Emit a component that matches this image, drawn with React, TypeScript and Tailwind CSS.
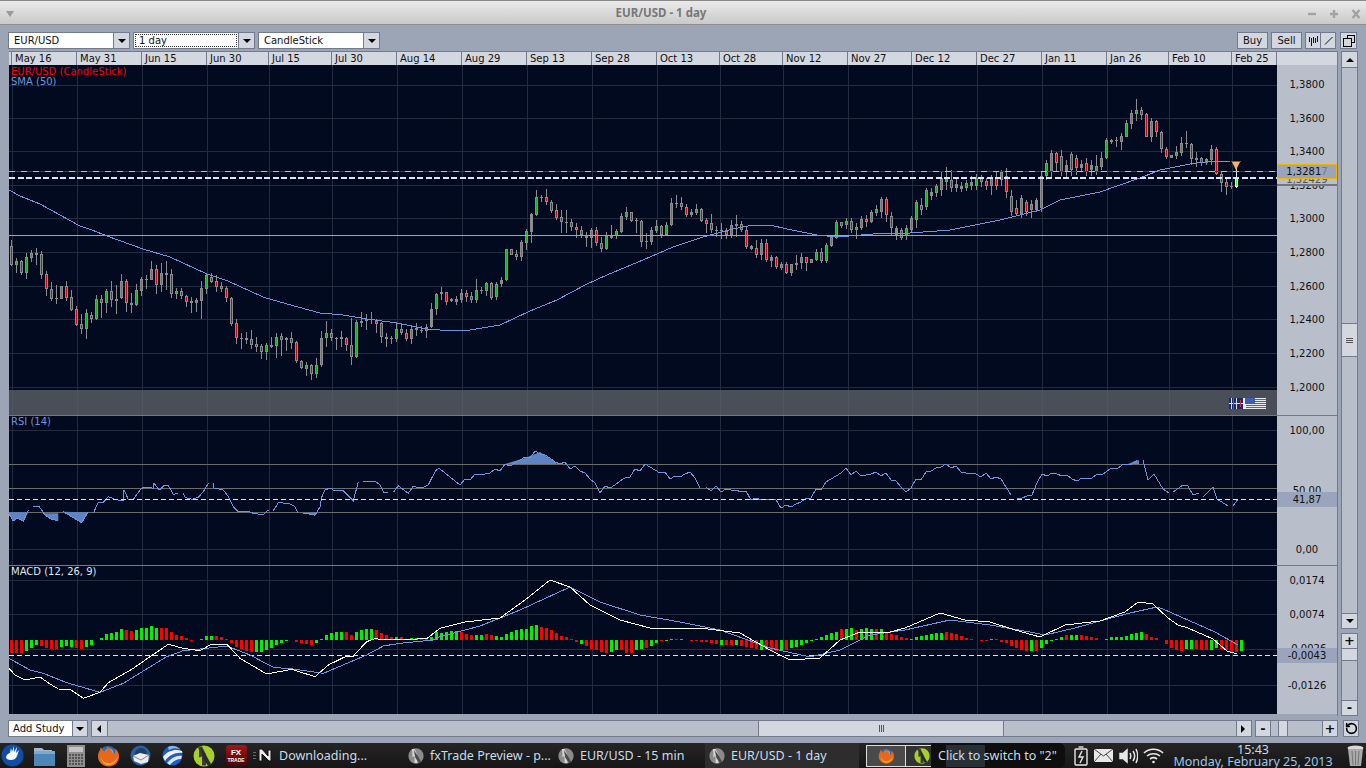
import { RotateCcw } from "lucide-react";
import type { ReactNode } from "react";

// measured on a 3x crop, so rows are "wickTop bodyTop bodyBottom wickBottom colour"
const CANDLES_A = "30 48 105 108 r,85 94 104 128 g,90 94 128 135 r,70 82 128 146 g,60 69 83 96 g,55 70 74 104 n,64 72 134 146 r,124 133 178 197 r,156 178 206 214 r,166 205 208 222 n,168 169 206 207 g,153 169 203 214 r,180 202 240 243 r,228 238 284 288 r,252 283 296 312 r,238 250 296 326 g,246 256 266 278 r,196 207 266 270 g,194 207 218 264 r,176 183 218 248 g,153 183 209 230 r,165 207 212 251 n,133 153 204 206 g,148 154 220 245 r,190 220 224 250 n,163 181 225 227 g,142 148 182 197 g,136 147 150 177 n,94 118 150 150 g,106 118 164 192 r,100 130 164 186 g,93 129 134 180 n,118 133 191 204 r,175 184 191 208 g,175 184 197 207 r,196 197 215 232 r,202 214 220 249 r,204 211 220 247 g,153 175 212 266 g,130 134 176 192 g,129 140 155 160 r,135 153 170 186 r,157 169 176 187 r,168 175 205 215 r,200 205 282 288 r,267 280 325 342 r,309 323 326 356 n,307 324 330 342 n,300 328 344 358 r,322 343 350 366 r,342 349 365 386 r,340 346 365 389 g,320 346 351 354 n,310 320 349 383 g,310 319 329 378 r,322 324 329 362 n,307 324 338 356 r,332 337 392 398 r,390 392 415 418 r,395 406 416 438 g,402 406 433 449 r,385 406 433 445 g,304 325 406 412 g,273 310 325 351 g,296 310 323 333 r,322 323 326 359 n,304 322 326 352 n,321 323 346 363 r,263 346 382 404 r,270 277 382 384 g,246 274 278 290 n,252 266 274 300 g,246 266 271 282 n,267 272 281 308 r,276 280 322 338 r,308 322 326 350 n,318 323 326 342 n,278 298 326 336 g,278 298 308 314 r,296 308 328 334 r,285 296 328 342 g,280 295 301 318 r,288 301 302 308 n,282 292 304 323 g,220 238 292 294 n,188 192 238 255 g";
const CANDLES_B = "350 366 373 390 n,365 367 395 405 r,385 388 392 395 n,378 388 395 405 n,358 370 390 400 g,360 370 380 395 r,365 378 390 400 r,328 361 390 400 g,352 360 364 372 n,335 339 362 378 g,335 339 385 390 r,335 343 380 390 g,320 331 343 350 n,236 238 331 332 g,236 238 254 256 r,240 252 260 270 r,210 216 260 272 g,178 184 218 240 g,128 132 185 218 n,60 82 134 138 g,75 80 82 96 n,57 82 97 105 r,90 97 122 128 r,102 121 143 150 r,120 142 157 188 r,120 156 158 190 n,148 157 172 182 r,160 172 179 204 r,168 179 195 203 r,185 198 204 232 r,174 181 205 234 g,170 181 218 228 r,200 218 236 246 r,185 197 236 240 g,165 198 203 206 n,178 184 197 208 g,130 138 185 188 g,110 127 140 150 g,125 127 152 155 r,145 151 153 188 n,150 154 217 232 r,190 214 217 236 n,170 181 215 226 g,150 169 183 190 g,165 168 195 204 r,157 166 194 198 g,83 99 166 168 g,75 100 102 115 n,82 100 112 120 r,103 112 135 140 r,118 126 134 142 n,103 118 128 135 g,115 117 152 156 r,144 151 161 188 r,132 160 181 190 r,168 180 182 200 n,158 180 184 206 n,175 184 194 208 r,150 166 196 204 g,135 163 167 200 n,154 163 181 185 r,168 180 231 238 r,225 228 237 240 n,210 234 254 264 r,208 218 254 270 g,208 218 270 275 r,254 262 272 292 n,258 262 292 298 r,275 283 294 300 g,275 283 308 312 r,282 283 308 318 g,255 280 285 300 n,250 262 280 296 g,260 262 278 302 r,266 268 278 280 g,236 247 270 274 g,235 247 272 278 r,218 226 272 278 g,200 201 228 232 g,150 156 205 208 g,155 157 168 175 r,144 153 166 178 g,145 153 180 188 r,160 172 180 206 g,138 147 175 180 g,135 148 156 170 r,120 127 156 158 g,104 118 128 138 g";
const CANDLES_C = "197 199 212 218 g,197 199 215 222 r,212 216 228 236 r,226 228 236 240 n,228 230 238 240 r,225 228 236 240 g,216 218 230 232 g,200 202 220 228 g,198 205 210 215 r,188 190 207 210 g,188 192 196 200 n,184 186 193 197 g,172 178 190 196 g,167 178 182 190 g,170 180 188 192 r,178 184 188 192 n,182 186 189 192 n,180 183 188 191 g,176 182 186 190 n,174 178 186 190 g,175 178 182 187 r,178 181 186 190 r,175 178 186 195 g,172 178 186 190 r,170 172 180 186 g,168 176 192 198 r,190 196 212 216 r,200 208 214 216 r,195 198 214 218 g,200 202 212 216 r,200 204 210 218 g,198 200 210 212 n,172 176 208 212 g,160 163 176 180 g,150 153 172 178 g,152 153 163 172 r,150 156 172 176 r,160 165 172 178 n,152 154 170 176 r,155 158 168 175 r,160 164 168 172 n,158 163 172 176 r,160 165 170 176 n,155 166 171 175 g";
const CANDLES_D = "185 203 232 240 g,145 150 205 208 g,148 151 155 162 n,142 150 152 172 n,130 138 155 180 g,90 98 142 142 g,60 68 102 118 g,27 60 72 93 g,52 60 74 90 r,70 72 140 142 r,85 92 140 155 g,90 94 127 140 r,122 126 178 190 r,170 178 202 208 r,195 196 203 204 g,168 186 198 208 g,142 158 188 198 g,122 158 162 175 n,158 162 208 225 r,185 204 209 232 n,200 204 218 228 r,205 208 218 225 g,165 177 210 224 g,170 177 252 256 r,245 252 278 305 r,260 276 290 315 r,275 289 291 298 n,235 265 290 295 b";

type Candle = { x: number; wt: number; bt: number; bb: number; wb: number; c: string };

function parseCandles(rows: string, x0: number, offset: number, scale: number): Candle[] {
  return rows.split(",").map((row, i) => {
    const p = row.split(" ");
    const y = (n: number) => Math.round(offset + Number(p[n]) / scale);
    return { x: x0 + i * 5, wt: y(0), bt: y(1), bb: y(2), wb: y(3), c: p[4] };
  });
}

const candles = [
  ...parseCandles(CANDLES_A, 11, 230, 3),
  ...parseCandles(CANDLES_B, 441, 170, 3),
  ...parseCandles(CANDLES_C, 881, 0, 1),
  ...parseCandles(CANDLES_D, 1101, 90, 3),
];

const HIST_A = "-13r -13r -13r -11g -8g -5g -6r -8r -9r -9r -7g -6g -7g -8r -9r -7g -5g 0g 2g 6g 7g 8g 11g 10r 9r 10g 12g 12g 14g 12g 12r 12r 8r 5r 4r 2r -1r 0g 1g 4g 4g 4r 3r 1r -3r -7r -9r -11r -12r -12g -12g -10g -8g -5g -3g -1g 0g -2r -3r -4r -5r -3g 1g 5g 7g 8g 8g 8r 5r 8g 10g 11g 11g 10r 7r 5r 3r 3g 3r 1r 2g 2g 2r 2r 3g 8g";
const HIST_B = "7g 8g 9g 9g 8r 6r 5r 5g 5g 6r 5r 4g 3g 6g 8g 10g 11g 11g 14g 15g 13r 12r 10r 7r 4r 3r 1r -2r -4g -6r -9r -10r -12r -13r -12g -10g -10r -13r -13r -10g -9g -8r -6g -3g -1r -1g 1g 1r 1g 0g -1r -1r -2r -2r -3r -4r -5g -5r -5r -5g -6r -7r -8r -9r -10g -10r -11r -11r -11g -10r -8g -7g -5g -3g -1g 1g 3g 5g 7g 8g 11r 11g 12g 10r 11g 12g 11g 11r 11g 8r 6r 5r 3r 2r 1g 3g 4g 5g 6g 7g 7g 8r 7r 6r 4r 2r 1r 0g -1r -1r 1g 1r -2r -3r -6r -8r -10r -11r -11g -11r -8g -4g -1g 1g 3g 5r 5g 5g 5r 4r 3r 2r";
const HIST_C = "1g 3g 3g 3g 4g 6g 7g 8g 6r 3r 2r 0g -4r -8r -10r -11r -9g -9g -9r -10r -10r -10g -8g -9r -10r -12r -12r -11g";

function parseHist(row: string, x0: number) {
  return row.split(" ").map((t, i) => ({ x: x0 + i * 5, v: parseInt(t), c: t.slice(-1) }));
}

const hist = [...parseHist(HIST_A, 11), ...parseHist(HIST_B, 441), ...parseHist(HIST_C, 1106)];

// "x,y x,y" in crop units to page coordinates
function pts(s: string, ox = 0, oy = 0, scale = 1) {
  return s.split(" ").map((p) => {
    const [a, b] = p.split(",").map(Number);
    return `${ox + a / scale},${oy + b / scale}`;
  }).join(" ");
}

// resample at candle spacing with a little wobble, the middle of the RSI was only read coarsely
function wobble(s: string) {
  const p = s.split(" ").map((q) => q.split(",").map(Number));
  const out: string[] = [];
  for (let x = p[0][0]; x <= p[p.length - 1][0]; x += 5) {
    const j = p.findIndex((q) => q[0] >= x);
    const a = p[Math.max(j - 1, 0)];
    const b = p[j];
    const t = b[0] === a[0] ? 0 : (x - a[0]) / (b[0] - a[0]);
    const y = a[1] + (b[1] - a[1]) * t + Math.sin(x * 1.7) * 1.6 + Math.sin(x * 0.63) * 1.4;
    out.push(`${x},${Math.round(y)}`);
  }
  return out.join(" ");
}

const SMA = [
  pts("9,190 20,196 40,204 60,215 80,226 92,230 107,236 143,249 170,257 207,274 228,281 263,297 287,304 320,313 343,315 367,319 397,323 427,329 440,330 470,330 500,325 530,311 557,300 587,284 607,275 643,260 673,247 703,237 733,229 753,225 770,225 787,229 817,235 837,237 873,234 880,233 910,233 950,230 1000,220 1040,210 1060,200 1100,192 1140,178 1160,170 1190,164 1212,161 1230,161"),
];

const RSI = [
  "27,312 40,333 52,325 70,334 85,300",
  "100,290 118,290 135,315 155,328 175,332",
  "190,305 215,320 245,338 265,305",
  "280,310 295,276 310,277 325,260 345,268 355,270 370,270 372,240 385,268 400,268 420,240 430,232 445,232 460,235 462,220 478,240 492,227 505,227 520,253 535,250",
  "550,250 555,262 575,268 595,262 610,245 625,220",
  "640,220 642,234 670,240 685,260 700,290 715,305 745,304 760,310 790,314 805,300",
  "820,302 835,278 865,280 885,290 895,310",
  "910,312 920,310 945,316 960,290 965,262 975,240 990,234 1000,240 1030,242 1060,272 1075,215",
  "1090,215 1125,213 1140,225 1150,246 1165,246",
  "1180,247 1195,228 1225,250 1240,228 1250,232 1270,232 1285,225 1300,195 1310,178 1320,175",
].map((s) => pts(s, 0, 410, 3));
const RSI_REST = [
  wobble("440,468 450,478 460,484 475,475 490,473 500,468 515,463 525,458 540,452 555,462 570,466 585,473 600,490 615,485 630,475 645,465 660,472 675,478 690,472 700,486"),
  wobble("706,488 720,490 740,490 755,500 770,498 785,508 800,503 815,493 830,480 845,470 860,475 880,473 895,480 905,493 920,478 935,468 950,465 965,473 985,476 1000,478 1012,496"),
  wobble("1017,498 1030,497 1042,475 1060,474 1075,480 1090,478 1105,472 1125,465 1140,460"),
  pts("1143,460 1148,480 1154,474 1163,489 1169,493"),
  pts("1173,492 1183,485 1188,486 1193,495 1199,493"),
  pts("1203,497 1213,487 1217,499 1228,506"),
  pts("1233,506 1238,499"),
];
const RSI_FILL = [
  pts("27,307 27,312 40,333 52,325 70,334 85,307", 0, 410, 3),
  pts("130,310 135,315 155,328 175,332 175,310", 0, 410, 3),
  pts("190,305 215,320 245,338 265,307", 0, 410, 3),
  pts("910,308 920,310 945,316 950,308", 0, 410, 3),
  pts("505,464 525,458 540,452 555,462 557,464"),
  pts("1128,464 1135,461 1139,460 1139,464"),
];

const MACD_WHITE = pts("27,325 45,345 70,358 90,357 120,351 150,372 175,387 210,388 250,415 300,397 325,368 400,325 450,290 505,253 550,265 600,272 630,255 680,252 720,295 800,342 875,328 945,350 985,315 1040,288 1060,288 1100,245 1125,236 1165,240 1280,236 1320,205", 0, 560, 3)
  + " " + pts("465,622 500,618 525,600 550,580 570,587 590,605 620,620 650,628 700,628 740,633 770,650 790,660 820,658 840,640 860,632 890,632 905,628 940,613 965,620 990,622 1015,630 1040,637 1065,625 1100,621 1125,612 1138,602 1153,604 1168,618 1178,625 1188,628 1213,639 1227,651 1237,654");
const MACD_BLUE = pts("27,295 90,330 130,340 200,368 300,397 370,370 500,290 550,272 620,265 680,258 750,285 820,322 880,327 970,340 1100,285 1150,258 1200,250 1300,240 1320,230", 0, 560, 3)
  + " " + pts("480,626 520,610 570,587 600,602 640,615 680,622 720,630 770,648 810,657 840,650 870,635 905,630 950,620 990,625 1030,632 1045,635 1075,628 1100,621 1130,613 1157,607 1163,609 1215,632 1238,645");

const VLINES = [12, 77, 142, 207, 269, 332, 397, 462, 527, 592, 657, 720, 783, 848, 912, 977, 1042, 1107, 1169, 1232];
const DATES = ["May 16", "May 31", "Jun 15", "Jun 30", "Jul 15", "Jul 30", "Aug 14", "Aug 29", "Sep 13", "Sep 28", "Oct 13", "Oct 28", "Nov 12", "Nov 27", "Dec 12", "Dec 27", "Jan 11", "Jan 26", "Feb 10", "Feb 25"];

const GRID = "#232c3f";
const BLUE = "#6f96dc";
const LEFT = 9;
const RIGHT = 1277;

function Grid({ top, bottom, rows }: { top: number; bottom: number; rows: number[] }) {
  return (
    <g shapeRendering="crispEdges" stroke={GRID}>
      {VLINES.map((x) => <line key={x} x1={x + 0.5} x2={x + 0.5} y1={top} y2={bottom} />)}
      {rows.map((y) => <line key={y} x1={LEFT} x2={RIGHT} y1={y + 0.5} y2={y + 0.5} />)}
    </g>
  );
}

function Hline({ y, color, dash, w = 1 }: { y: number; color: string; dash?: string; w?: number }) {
  return <line x1={LEFT} x2={RIGHT} y1={y} y2={y} stroke={color} strokeWidth={w} strokeDasharray={dash} shapeRendering="crispEdges" />;
}

function Price() {
  return (
    <svg className="block w-[1268px] h-[350px] bg-[#010a1f]" viewBox="9 65 1268 350">
      <Grid top={65} bottom={415} rows={[85, 118, 151, 185, 218, 252, 286, 319, 353, 387]} />
      <g shapeRendering="crispEdges">
        {candles.map((k) => {
          const fill = k.c === "r" ? "#d00010" : k.c === "g" ? "#10b020" : k.c === "b" ? "#30ff40" : "#8c8c8c";
          const edge = k.c === "b" ? "#e8e8e8" : "#8c8c8c";
          return (
            <g key={k.x}>
              <line x1={k.x + 0.5} x2={k.x + 0.5} y1={k.wt} y2={k.wb} stroke={edge} />
              <rect x={k.x - 1} y={k.bt} width={3} height={Math.max(k.bb - k.bt, 1)} fill={edge} />
              {k.bb - k.bt > 2 && <rect x={k.x} y={k.bt + 1} width={1} height={k.bb - k.bt - 2} fill={fill} />}
            </g>
          );
        })}
      </g>
      <Hline y={235.5} color="#7cc27a" />
      <Hline y={171.5} color="#7a2034" />
      <Hline y={171.5} color="#ecc81e" dash="6 6" />
      {SMA.map((p) => <polyline key={p} points={p} fill="none" stroke={BLUE} shapeRendering="crispEdges" />)}
      <Hline y={178} color="#dce6ff" dash="6 2.5" w={2} />
      <line x1={1231} x2={1241} y1={161.5} y2={161.5} stroke="#666" shapeRendering="crispEdges" />
      <polygon points="1232,162 1240,162 1236,170" fill="#ffb557" />
      <rect x={9} y={390} width={1268} height={25} fill="#5a5e66" fillOpacity={0.82} />
      {/* flag pair sitting on the grey strip */}
      <g shapeRendering="crispEdges">
        <rect x={1229} y={398} width={37} height={11} fill="#e9e9ee" />
        <rect x={1229} y={398} width={14} height={11} fill="#1b2a6b" />
        <path d="M1231 398v11M1236 398v11M1229 403h14" stroke="#e9d5d5" />
        <path d="M1233 398v11M1240 400v7" stroke="#c8323c" />
        {[399, 401, 403, 405, 407].map((y) => <rect key={y} x={1246} y={y} width={20} height={1} fill="#d8352e" />)}
        <rect x={1245} y={398} width={10} height={6} fill="#3a5fb0" />
      </g>
    </svg>
  );
}

function Rsi() {
  return (
    <svg className="block w-[1268px] h-[149px] bg-[#010a1f]" viewBox="9 416 1268 149">
      <Grid top={416} bottom={565} rows={[430, 549]} />
      <Hline y={464.5} color="#6c6c6c" />
      <Hline y={488.5} color="#6c6c6c" />
      <Hline y={512.5} color="#6c6c6c" />
      {RSI_FILL.map((p) => <polygon key={p} points={p} fill="#5f84c4" />)}
      {[...RSI, ...RSI_REST].map((p) => <polyline key={p} points={p} fill="none" stroke={BLUE} shapeRendering="crispEdges" />)}
      <Hline y={499.5} color="#dce6ff" dash="5 3" />
    </svg>
  );
}

function Macd() {
  return (
    <svg className="block w-[1268px] h-[148px] bg-[#010a1f]" viewBox="9 566 1268 148">
      <Grid top={566} bottom={714} rows={[580, 614, 649, 685]} />
      <g shapeRendering="crispEdges">
        {hist.filter((h) => h.v !== 0).map((h) => (
          <rect key={h.x} x={h.x - 1} y={h.v > 0 ? 640 - h.v : 640} width={3} height={Math.abs(h.v)} fill={h.c === "r" ? "#ff0000" : "#00f000"} />
        ))}
      </g>
      <Hline y={655.5} color="#dce6ff" dash="5 3" />
      <polyline points={MACD_BLUE} fill="none" stroke={BLUE} shapeRendering="crispEdges" />
      <polyline points={MACD_WHITE} fill="none" stroke="#ffffff" shapeRendering="crispEdges" />
    </svg>
  );
}

function Tick({ top, children, box }: { top: number; children: ReactNode; box?: boolean }) {
  return (
    <div
      className={box
        ? "absolute left-0 w-[60px] h-[15px] flex items-center justify-center bg-[#9aa5bd] text-[#111]"
        : "absolute left-0 w-[60px] h-[14px] flex items-center justify-center text-[#111]"}
      style={{ top }}
    >
      {children}
    </div>
  );
}

function Caret({ dir = "down" }: { dir?: "down" | "up" | "left" | "right" }) {
  const d = { down: "M0 0h8L4 4z", up: "M0 4h8L4 0z", left: "M5 -2v8L1 2z", right: "M1 -2v8l4-4z" }[dir];
  return <svg className="w-[8px] h-[4px] overflow-visible" viewBox="0 0 8 4"><path d={d} fill="#000" /></svg>;
}

function Btn({ className, children }: { className: string; children?: ReactNode }) {
  return <div className={`flex items-center justify-center border border-[#727a8c] bg-[#d3d7df] text-[#111] ${className}`}>{children}</div>;
}

function Combo({ label, dotted, w }: { label: string; dotted?: boolean; w: string }) {
  return (
    <div className={`flex h-[17px] border border-[#727a8c] ${w}`}>
      <div className="flex-1 bg-white flex items-center p-[1px]">
        <div className={dotted ? "h-full w-full flex items-center pl-[3px] border border-dotted border-[#333]" : "pl-[4px]"}>{label}</div>
      </div>
      <div className="w-[16px] border-l border-[#727a8c] bg-[#d3d7df] flex items-center justify-center"><Caret /></div>
    </div>
  );
}

function TopBar() {
  return (
    <div className="relative h-[25px] shrink-0 flex items-center justify-center pr-[44px] border-t border-[#8a8a8a] border-b border-b-[#8e8e8e] bg-gradient-to-b from-[#ebebeb] to-[#c9c9c9]">
      <svg className="absolute left-[6px] top-[10px] w-[8px] h-[6px]" viewBox="0 0 8 6"><path d="M0 0h8L4 6z" fill="#9a9a9a" /></svg>
      <span className="font-bold text-[11.5px] text-[#777] font-['Noto_Sans',sans-serif]">EUR/USD - 1 day</span>
      <svg className="absolute right-0 top-[6px] w-[64px] h-[13px]" viewBox="0 0 64 13" stroke="#a2a2a2" strokeWidth="2.4">
        <path d="M6 7h8" />
        <path d="M28 7h8M32 3v8" />
        <path d="M50.500 3l7 8M57.500 3l-7 8" />
      </svg>
    </div>
  );
}

function Toolbar() {
  return (
    <div className="h-[17px] mt-[7px] ml-[8px] flex items-center shrink-0">
      <Combo label="EUR/USD" w="w-[122px]" />
      <div className="w-[3px]" />
      <Combo label="1 day" dotted w="w-[122px]" />
      <div className="w-[3px]" />
      <Combo label="CandleStick" w="w-[122px]" />
      <div className="ml-[857px] flex">
        <Btn className="w-[31px] h-[17px]">Buy</Btn>
        <Btn className="w-[31px] h-[17px] ml-[3px]">Sell</Btn>
        <Btn className="w-[16px] h-[17px] ml-[3px]">
          <svg className="w-[10px] h-[10px]" viewBox="0 0 10 10" stroke="#111" shapeRendering="crispEdges"><path d="M1.5 1v5M3.5 2v8M5.5 1v6M7.5 2v5M9.5 0v6" /></svg>
        </Btn>
        <Btn className="w-[16px] h-[17px] -ml-[1px]">
          <svg className="w-[9px] h-[9px]" viewBox="0 0 9 9" stroke="#111"><path d="M1 8.5L8.5 1" /></svg>
        </Btn>
        <Btn className="w-[17px] h-[17px] ml-[4px]">
          <svg className="w-[12px] h-[12px]" viewBox="0 0 12 12" fill="none" stroke="#000" shapeRendering="crispEdges"><path d="M4.5 3.5v-3h7v7h-3" /><rect x="0.5" y="3.5" width="8" height="8" strokeWidth="1.2" /></svg>
        </Btn>
      </div>
    </div>
  );
}

function DateHeader() {
  return (
    <div className="flex h-[14px] shrink-0 bg-[#d3d7df] border-t border-[#727a8c]">
      <div className="w-[3px] border-r border-[#727a8c]" />
      {DATES.map((d, i) => (
        <div key={d} className="border-r border-[#727a8c] pl-[3px] leading-[13px] overflow-hidden" style={{ width: (VLINES[i + 1] ?? RIGHT) - VLINES[i] }}>{d}</div>
      ))}
    </div>
  );
}

function Axis({ className, children }: { className: string; children: ReactNode }) {
  return <div className={`relative w-[60px] shrink-0 bg-[#b9becb] overflow-hidden ${className}`}>{children}</div>;
}

function Charts() {
  return (
    <div className="w-[1329px] ml-[9px] flex flex-col border-r border-[#727a8c]">
      <DateHeader />
      <div className="flex h-[351px] border-b border-[#747986] relative">
        <Price />
        <div className="absolute left-[2px] top-[2px] leading-[10px] pointer-events-none">
          <div className="text-[#ff0000]">EUR/USD (CandleStick)</div>
          <div className="text-[#6f96dc]">SMA (50)</div>
        </div>
        <Axis className="h-[350px]">
          {[["1,3800", 12], ["1,3600", 46], ["1,3400", 79], ["1,3200", 113], ["1,3000", 146], ["1,2800", 180], ["1,2600", 214], ["1,2400", 247], ["1,2200", 281], ["1,2000", 315]].map(([t, y]) => (
            <Tick key={t} top={y as number}>{t}</Tick>
          ))}
          <div className="absolute left-0 top-[108px] w-[60px] h-[12px] bg-[#b9becb] flex items-center justify-center text-[#555]">1,32429</div>
          <div className="absolute left-0 top-[119px] w-[60px] h-[2px] bg-[#6f7686]" />
          <div className="absolute left-0 top-[99px] w-[60px] h-[15px] flex items-center justify-center bg-[#9aa5bd] border border-[#f0b400] text-[#111]">
            1,3281<span className="text-[#777]">7</span>
          </div>
        </Axis>
      </div>
      <div className="flex h-[150px] border-b border-[#727a8c] relative">
        <Rsi />
        <div className="absolute left-[2px] top-0 text-[#6f96dc] leading-[11px]">RSI (14)</div>
        <Axis className="h-[149px]">
          <Tick top={7}>100,00</Tick>
          <Tick top={67}>50,00</Tick>
          <Tick top={76} box>41,87</Tick>
          <Tick top={126}>0,00</Tick>
        </Axis>
      </div>
      <div className="flex h-[148px] relative">
        <Macd />
        <div className="absolute left-[2px] top-0 text-[#dfe6f5] leading-[11px]">MACD (12, 26, 9)</div>
        <Axis className="h-[148px]">
          <Tick top={7}>0,0174</Tick>
          <Tick top={41}>0,0074</Tick>
          <Tick top={75}>-0,0026</Tick>
          <Tick top={82} box>-0,0043</Tick>
          <Tick top={112}>-0,0126</Tick>
        </Axis>
      </div>
    </div>
  );
}

function VScroll() {
  return (
    <div className="w-[17px] ml-[3px] flex flex-col h-[665px]">
      <Btn className="h-[17px] shrink-0"><Caret dir="up" /></Btn>
      <div className="bg-[#b9becb] border-x border-[#727a8c] h-[255px] shrink-0" />
      <div className="bg-[#d3d7df] border border-[#727a8c] h-[34px] shrink-0 flex flex-col items-center justify-center gap-[1px]">
        <div className="w-[7px] h-[1px] bg-[#555]" /><div className="w-[7px] h-[1px] bg-[#555]" /><div className="w-[7px] h-[1px] bg-[#555]" />
      </div>
      <div className="bg-[#b9becb] border-x border-[#727a8c] h-[256px] shrink-0" />
      <Btn className="h-[16px] shrink-0"><Caret /></Btn>
      <div className="h-[4px] shrink-0" />
      <Btn className="h-[16px] shrink-0 font-bold text-[13px]">+</Btn>
      <div className="bg-[#d3d7df] border-x border-b border-[#727a8c] h-[12px] shrink-0" />
      <div className="bg-[#b9becb] border-x border-[#727a8c] flex-1" />
      <Btn className="h-[16px] shrink-0 font-bold text-[13px]">-</Btn>
    </div>
  );
}

function BottomBar() {
  return (
    <div className="h-[17px] mt-[4px] ml-[8px] flex shrink-0">
      <div className="w-[64px] bg-white border border-[#727a8c] border-r-0 flex items-center pl-[4px]">Add Study</div>
      <Btn className="w-[16px]"><Caret /></Btn>
      <div className="w-[3px]" />
      <Btn className="w-[17px]"><Caret dir="left" /></Btn>
      <div className="w-[650px] bg-[#b9becb] border-y border-[#727a8c]" />
      <div className="w-[246px] bg-[#d3d7df] border border-[#727a8c] flex items-center justify-center text-[#555] text-[9px] gap-[1px]">
        <span className="w-[1px] h-[7px] bg-[#555]" /><span className="w-[1px] h-[7px] bg-[#555]" /><span className="w-[1px] h-[7px] bg-[#555]" />
      </div>
      <div className="w-[232px] bg-[#b9becb] border-y border-[#727a8c]" />
      <Btn className="w-[16px]"><Caret dir="right" /></Btn>
      <div className="w-[3px]" />
      <Btn className="w-[16px] font-bold text-[13px]">-</Btn>
      <div className="w-[7px] bg-[#b9becb] border-y border-[#727a8c]" />
      <div className="w-[10px] bg-[#d3d7df] border border-[#727a8c]" />
      <div className="w-[34px] bg-[#b9becb] border-y border-[#727a8c]" />
      <Btn className="w-[16px] font-bold text-[13px]">+</Btn>
      <div className="w-[5px]" />
      <Btn className="w-[16px]"><RotateCcw size={13} strokeWidth={3} color="#000" /></Btn>
    </div>
  );
}

function Firefox({ s = 22 }: { s?: number }) {
  return (
    <svg width={s} height={s} viewBox="0 0 22 22">
      <circle cx="11" cy="11" r="10" fill="#2c6cb4" />
      <circle cx="12" cy="8" r="4.500" fill="#7fb4e6" />
      <path d="M4 2c-1 2-1 4-2 5-3 6 1 14 9 14.500 6 .4 11-4 11-10 0-3-1-6-4-8 1 3 0 6-2 6 0-3-3-6-6-8 1 3-1 4-3 5-1-1-2-2-3-4z" fill="#e8671a" />
      <path d="M4 12c1 5 6 7 10 6 3-1 6-4 7-7-1 6-5 9-10 9-4 0-7-4-7-8z" fill="#f6b02c" />
    </svg>
  );
}

function NLogo({ lime, s = 21 }: { lime?: boolean; s?: number }) {
  return (
    <svg width={s} height={s} viewBox="0 0 22 22">
      <circle cx="11" cy="11" r="10.500" fill={lime ? "#a8cf2c" : "#8b8b8b"} />
      <path d="M5 1.500h4l4 8v11h-4v-9l-3 1v-7z" fill={lime ? "#3b3b3b" : "#d5d5d5"} />
      <path d="M8 3l5 7 5 9-3 2-5-8z" fill={lime ? "#2b2b2b" : "#4a4a4a"} />
    </svg>
  );
}

function TaskItem({ icon, label, className }: { icon: ReactNode; label: string; className: string }) {
  return (
    <div className={`flex items-center shrink-0 ${className}`}>
      {icon}
      <span className="ml-[6px] pt-[1px] text-[12.5px] whitespace-nowrap text-[#c9dcec]">{label}</span>
    </div>
  );
}

function Taskbar() {
  return (
    <div className="relative h-[25px] shrink-0 flex items-center bg-gradient-to-b from-[#252525] to-[#161616] font-['Noto_Sans',sans-serif]">
      <div className="w-[28px] pl-[1px] flex">
        <svg width="23" height="23" viewBox="0 0 23 23">
          <circle cx="11.500" cy="11.500" r="11" fill="#0f4ea6" />
          <path d="M5 13c1-3 3-4 4-4l1-5 1 4 2-6 0 6 3-5-1 6 3-3-2 6c-1 3-4 4-6 4-3 0-5-1-5-3z" fill="#fff" />
        </svg>
      </div>
      <div className="w-[32px] flex justify-center">
        <svg width="23" height="22" viewBox="0 0 23 22">
          <path d="M1 3h8l2 2h8v15H1z" fill="#9fb9cf" />
          <path d="M1 6h21v15H1z" fill="#4f86b8" />
          <path d="M1 6h21v3H1z" fill="#7fa9cc" />
        </svg>
      </div>
      <div className="w-[32px] flex justify-center">
        <svg width="18" height="22" viewBox="0 0 18 22" shapeRendering="crispEdges">
          <rect width="18" height="22" fill="#8f8f8f" />
          <rect x="2" y="2" width="14" height="5" fill="#c4c4c4" />
          <path d="M2 10h14M2 13h14M2 16h14M2 19h14" stroke="#555" strokeWidth="2" strokeDasharray="2 1" />
        </svg>
      </div>
      <div className="w-[32px] flex justify-center"><Firefox /></div>
      <div className="w-[32px] flex justify-center">
        <svg width="21" height="21" viewBox="0 0 21 21">
          <circle cx="10.500" cy="10.500" r="10" fill="#2a5f9c" />
          <circle cx="11" cy="9" r="6" fill="#1d3e69" />
          <path d="M3 11l7-3 9 2-1 7-7 2-7-3z" fill="#ececec" />
          <path d="M3 11l8 4 8-5" stroke="#888" fill="none" />
        </svg>
      </div>
      <div className="w-[32px] flex justify-center">
        <svg width="21" height="21" viewBox="0 0 21 21">
          <circle cx="10.500" cy="10.500" r="10" fill="#1f5cc4" />
          <path d="M1 12C6 5 14 4 20 6l.500 2C14 7 7 10 3 16z" fill="#f2f2f2" />
          <path d="M5 18c5-6 10-8 15-7l-1 3c-4 0-8 2-11 6z" fill="#dbe7f7" />
          <path d="M6 2c4-2 9-1 12 2-4-1-8-1-11 1z" fill="#8fb7ee" />
        </svg>
      </div>
      <div className="w-[32px] flex justify-center"><NLogo lime s={22} /></div>
      <div className="w-[32px] flex justify-center">
        <div className="w-[21px] h-[21px] rounded-[3px] bg-gradient-to-b from-[#a4161a] to-[#4a0406] flex flex-col items-center justify-center font-['Liberation_Sans',sans-serif] font-bold text-white leading-none">
          <span className="text-[8px]">FX</span>
          <span className="text-[5px] mt-[1px]">TRADE</span>
        </div>
      </div>
      <div className="w-[5px] flex flex-col items-center gap-[2px]">
        <div className="w-[3px] h-[1px] bg-[#666]" /><div className="w-[3px] h-[1px] bg-[#666]" /><div className="w-[3px] h-[1px] bg-[#666]" />
      </div>
      <TaskItem
        className="w-[149px] pl-[1px]"
        icon={<svg width="15" height="15" viewBox="0 0 15 15"><path d="M1 1h3l6 7V2h3v11h-2L4 6v7H1z" fill="#ececec" stroke="#111" /></svg>}
        label="Downloading..."
      />
      <TaskItem className="w-[150px] pl-[2px]" icon={<NLogo s={16} />} label="fxTrade Preview - p..." />
      <TaskItem className="w-[149px] pl-[2px]" icon={<NLogo s={16} />} label="EUR/USD - 15 min" />
      <TaskItem className="w-[154px] h-[25px] pl-[4px] bg-[#2d2d2d]" icon={<NLogo s={16} />} label="EUR/USD - 1 day" />
      <div className="w-[7px] shrink-0" />
      {/* pager with the hover tooltip lying over it */}
      <div className="relative flex h-[22px] w-[200px] shrink-0">
        <div className="w-[40px] border border-[#ddd] bg-[#4a4a4a] flex items-center justify-center"><Firefox s={16} /></div>
        <div className="w-[39px] border border-[#ddd] border-l-0 bg-[#333] flex items-center justify-start pl-[8px]"><NLogo lime s={16} /></div>
        <div className="absolute left-[65px] -top-[2px] w-[134px] h-[25px] rounded-r-[6px] bg-[#0e0e0e]" />
        <div className="absolute left-[80px] top-0 w-[39px] h-[22px] bg-[#283036]" />
        <div className="absolute left-[72px] top-[2px] text-[12.5px] text-[#c9dcec] whitespace-nowrap">Click to switch to "2"</div>
      </div>
      <div className="w-[8px] shrink-0" />
      <svg className="shrink-0" width="14" height="20" viewBox="0 0 14 20" fill="none" stroke="#e6e6e6" strokeWidth="1.400"><rect x="1" y="3" width="12" height="16" rx="1" /><path d="M4.500 1h5" /><path d="M8 5L5 11h4l-3 6" /></svg>
      <svg className="ml-[6px] shrink-0" width="19" height="13" viewBox="0 0 19 13"><rect width="19" height="13" fill="#e8e8e8" /><path d="M0 0l9.500 7L19 0M0 13l7-8M19 13l-7-8" stroke="#444" fill="none" /></svg>
      <svg className="ml-[6px] shrink-0" width="19" height="16" viewBox="0 0 19 16" fill="none" stroke="#e8e8e8" strokeWidth="1.500"><path d="M1 5.500h3L8 2v12l-4-3.500H1z" fill="#e8e8e8" /><path d="M11 5c1 2 1 4 0 6M14 3c2 3 2 7 0 10M17 1c2 4 2 10 0 14" /></svg>
      <svg className="ml-[5px] shrink-0" width="21" height="17" viewBox="0 0 21 17" fill="none" stroke="#e8e8e8" strokeWidth="1.600"><path d="M1 6c5-5 14-5 19 0M4 9c3.500-3 9.500-3 13 0M7 12c2-1.500 5-1.500 7 0" /><circle cx="10.500" cy="15" r="1.300" fill="#e8e8e8" stroke="none" /></svg>
      <div className="w-[172px] ml-[3px] h-[25px] shrink-0 flex flex-col items-center overflow-hidden">
        <div className="text-[12.5px] leading-[14px] text-[#c7d9ea]">15:43</div>
        <div className="text-[12.5px] leading-[14px] -mt-[2px] whitespace-nowrap text-[#9cc6ea]">Monday, February 25, 2013</div>
      </div>
      <svg className="absolute right-[2px] top-[2px]" width="17" height="22" viewBox="0 0 17 22">
        <ellipse cx="8.500" cy="3" rx="8" ry="2.500" fill="#d8d8d8" />
        <path d="M1 4h15l-2 17H3z" fill="#a9a9a9" />
        <path d="M5 6l1 14M8.500 6v14M12 6l-1 14" stroke="#777" />
      </svg>
    </div>
  );
}

export default function App() {
  return (
    <div className="w-[1366px] h-[768px] overflow-hidden flex flex-col bg-[#9ca5b6] text-[10px] text-[#111] font-['DejaVu_Sans',sans-serif]">
      <TopBar />
      <div className="flex-1 min-h-0 flex flex-col">
        <Toolbar />
        <div className="flex mt-[2px] h-[665px] shrink-0">
          <Charts />
          <VScroll />
        </div>
        <BottomBar />
      </div>
      <Taskbar />
    </div>
  );
}
